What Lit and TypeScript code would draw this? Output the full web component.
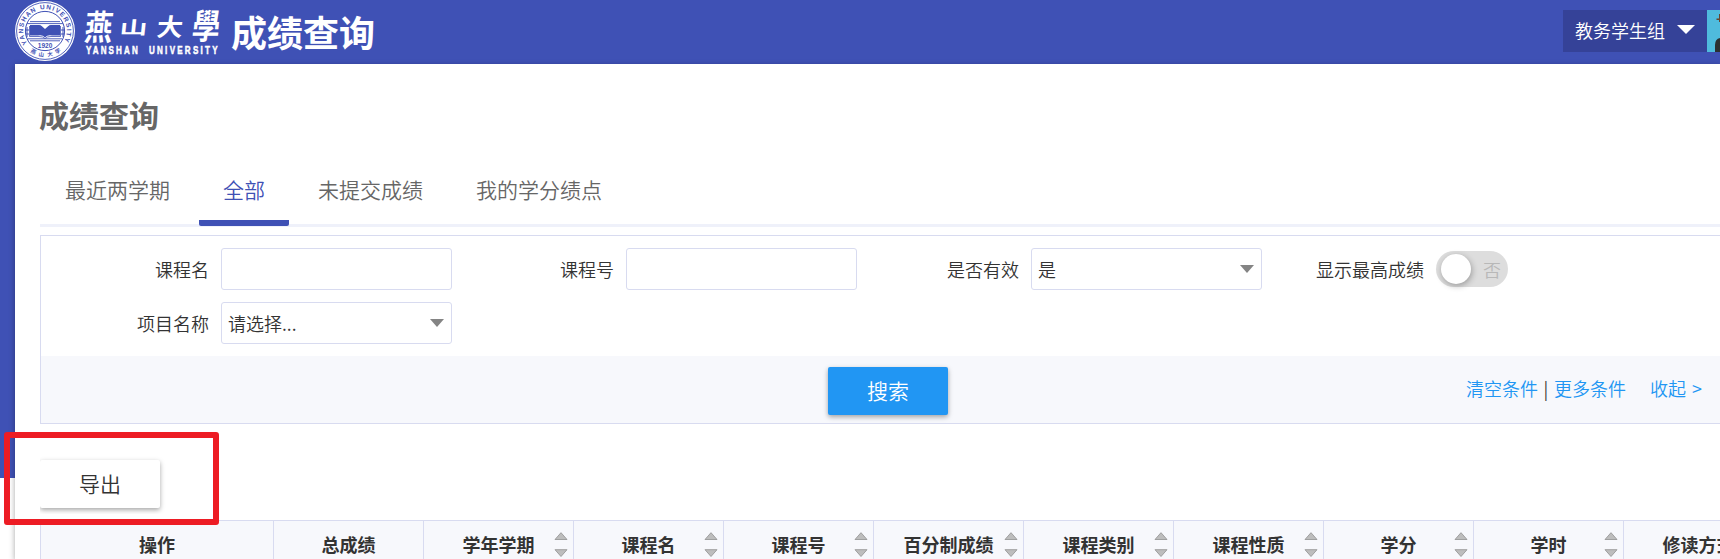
import { LitElement, html, svg, css } from "lit";
import { customElement, property } from "lit/decorators.js";

@customElement("school-logo")
class SchoolLogo extends LitElement {
  static styles = css`
    :host { display: block; }
    svg { display: block; }
    .seal-text { font: bold 6.5px "Liberation Sans", sans-serif; fill: #3f51b5; }
    .seal-cn { font: bold 5.5px "Noto Sans CJK SC", sans-serif; fill: #3f51b5; }
    .year { font: bold 6.5px "Liberation Sans", sans-serif; fill: #3f51b5; }
    .brush { font: 700 29px "Noto Sans CJK TC", sans-serif; fill: #fff; }
    .latin { font: bold 11.5px "Liberation Sans", sans-serif; fill: #fff; stroke: #fff; stroke-width: 0.5px; }
  `;
  render() {
    const brush: [string, number, number, number, number][] = [
      ["燕", 83.5, 40, 0.97, 1.2],
      ["山", 119, 34, 0.96, 0.6],
      ["大", 156, 36, 0.9, 0.84],
      ["學", 191, 39, 0.96, 1.2],
    ];
    return html`<svg width="224" height="64" viewBox="0 0 224 64">
      <circle cx="45" cy="31" r="30" fill="#fff" />
      <circle cx="45" cy="31" r="28.4" fill="none" stroke="#3f51b5" stroke-width="0.9" />
      <circle cx="45" cy="31" r="19.6" fill="none" stroke="#3f51b5" stroke-width="1" />
      <path id="arc" d="M 27.2 43.500 A 21.8 21.8 0 1 1 62.8 43.500" fill="none" />
      <text class="seal-text"><textPath href="#arc" textLength="92" lengthAdjust="spacing">YANSHAN UNIVERSITY</textPath></text>
      <path id="low" d="M 27 49.500 A 26 26 0 0 0 63 49.500" fill="none" />
      <text class="seal-cn"><textPath href="#low" textLength="33" startOffset="4">燕山大学</textPath></text>
      <path d="M30 21.6H60M27 23.6H63M27.5 38.8H62.5M30 40.8H60" stroke="#3f51b5" stroke-width="0.9" />
      <path d="M30 25H39Q43 25 45 28Q47 25 51 25H60V35.6H52Q47.5 34.6 45 37.6Q42.500 34.6 38 35.6H30Z" fill="#3f51b5" />
      <path d="M29.500 26V36.500H39Q43 36.300 45 38.600Q47 36.300 51 36.500H60.500V26" fill="none" stroke="#3f51b5" stroke-width="0.8" />
      <path d="M27 27V37M63 27V37M25.500 30H29M61 30H64.500M25.500 34H29M61 34H64.500" stroke="#3f51b5" stroke-width="1" />
      <path d="M40 24.500L45 29L50 24.500Z" fill="#fff" />
      <text class="year" x="37.800" y="48">1920</text>
      ${brush.map(([c, x, y, sx, sy]) => svg`<text class="brush" transform=${`translate(${x} ${y}) skewX(-6) scale(${sx} ${sy})`}>${c}</text>`)}
      <text class="latin" transform="translate(86 54) scale(0.7 1)" textLength="74" lengthAdjust="spacing">YANSHAN</text>
      <text class="latin" transform="translate(149 54) scale(0.7 1)" textLength="98" lengthAdjust="spacing">UNIVERSITY</text>
    </svg>`;
  }
}

@customElement("form-field")
class FormField extends LitElement {
  @property() label = "";
  @property() kind = "input";
  @property() value = "";
  static styles = css`
    :host { display: grid; grid-template-columns: 168px 231px; column-gap: 12px; align-items: center; height: 42px; font-size: 18px; line-height: 42px; }
    .label { text-align: right; white-space: nowrap; }
    .box { box-sizing: border-box; height: 42px; border: 1px solid #d8dbf0; border-radius: 3px; background: #fff; padding: 0 7px 0 6px; display: flex; align-items: center; justify-content: space-between; line-height: 40px; }
    .toggle { width: 72px; height: 36px; box-sizing: border-box; border-radius: 18px; background: #ddd; padding: 0 7px 0 5px; display: flex; align-items: center; justify-content: space-between; color: #b8b8b8; }
    .knob { width: 30px; height: 30px; border-radius: 50%; background: #fff; box-shadow: 1px 2px 6px rgba(0, 0, 0, 0.3); }
  `;
  render() {
    const arrow = html`<svg width="14" height="8" viewBox="0 0 14 8"><path d="M0 0H14L7 8Z" fill="#848484" /></svg>`;
    return html`<span class="label">${this.label}</span>
      ${this.kind === "toggle"
        ? html`<div class="toggle"><span class="knob"></span><span>${this.value}</span></div>`
        : html`<div class="box"><span>${this.value}</span>${this.kind === "select" ? arrow : null}</div>`}`;
  }
}

@customElement("app-root")
class AppRoot extends LitElement {
  static styles = css`
    :host { display: block; position: relative; width: 100%; height: 559px; overflow: hidden; background: linear-gradient(#3f51b5 478px, #fff 478px); font-family: "Noto Sans CJK SC", sans-serif; font-weight: 350; color: #333; white-space: nowrap; }
    .top { height: 64px; display: flex; background: #3f51b5; }
    .app { font-size: 36px; font-weight: 700; color: #fff; line-height: 62px; margin-left: 7px; flex: 1; }
    .user { margin-top: 10px; width: 144px; height: 42px; box-sizing: border-box; padding: 0 12px; display: flex; justify-content: space-between; align-items: center; background: #354298; color: #fff; font-size: 18px; line-height: 26px; }
    .user span { padding-bottom: 2px; }
    .user svg { margin-top: -4px; }
    .avatar { margin-top: 10px; width: 13px; height: 42px; display: block; }
    .sheet { margin-left: 15px; height: 495px; box-sizing: border-box; padding-left: 25px; background: #fff; box-shadow: 0 2px 6px rgba(0, 0, 0, 0.35); }
    h1 { margin: 0 0 0 -1px; padding-top: 28px; font-size: 30px; font-weight: 700; line-height: 44px; height: 44px; color: #666; }
    .tabs { display: flex; gap: 5px; padding-left: 1px; height: 63px; margin-top: 28px; margin-right: -20px; box-shadow: inset 0 -3px #eff1fa; }
    .tab { height: 62px; box-sizing: border-box; padding: 0 24px; font-size: 21px; line-height: 50px; color: #666; }
    .on { color: #3f51b5; border-bottom: 6px solid #3f51b5; border-radius: 0 0 2px 2px; }
    .panel { margin: 8px -20px 0 0; height: 189px; box-sizing: border-box; border: 1px solid #d8dbf0; }
    .fields { display: grid; grid-template-columns: repeat(4, 405px); grid-auto-rows: 42px; row-gap: 12px; padding: 12px 0; height: 120px; box-sizing: border-box; }
    .actions { height: 67px; background: #f7f8fc; display: grid; grid-template-columns: 787px 120px 1fr; align-items: start; }
    .button { width: 120px; height: 48px; border-radius: 2px; font-size: 21px; line-height: 46px; text-align: center; box-shadow: 0 2px 5px rgba(0, 0, 0, 0.35); background: #fff; }
    .search { grid-column: 2; margin-top: 11px; background: #2196f3; color: #fff; }
    .links { display: flex; color: #2196f3; font-size: 18px; line-height: 26px; margin: 19px 0 0 518px; }
    .bar { color: #333; width: 16px; text-align: center; }
    .fold { margin-left: 24px; word-spacing: 2px; }
    .export { height: 60px; margin-top: 30px; padding-top: 6px; box-sizing: border-box; overflow: hidden; }
    .table { display: flex; height: 60px; margin-top: 6px; width: 1733px; border: 1px solid #d8dbf0; border-right: 0; background: #f7f8fc; box-sizing: border-box; }
    .cell { width: 150px; flex: none; box-sizing: border-box; border-right: 1px solid #d8dbf0; font-size: 18px; font-weight: 700; line-height: 47px; display: grid; grid-template-columns: 19px 1fr 19px; text-align: center; }
    .cell:first-child { width: 233px; }
    .cell span { grid-column: 2; display: flex; justify-content: center; }
    .sort { margin-top: 11px; }
    .mark { position: absolute; left: 4px; top: 432px; width: 215px; height: 93px; box-sizing: border-box; border: 6px solid #ed1c24; border-radius: 3px; }
  `;
  render() {
    const columns = ["操作", "总成绩", "学年学期", "课程名", "课程号", "百分制成绩", "课程类别", "课程性质", "学分", "学时", "修读方式"];
    const tabs = ["最近两学期", "全部", "未提交成绩", "我的学分绩点"];
    const sort = html`<svg class="sort" width="14" height="26" viewBox="0 0 14 26">
      <path d="M1 7.500H13L7 0.700Z" fill="#bdbdbd" stroke="#999" stroke-width="0.9" />
      <path d="M1 17.700H13L7 24.500Z" fill="#bdbdbd" stroke="#999" stroke-width="0.9" />
    </svg>`;
    return html`
      <header class="top">
        <school-logo></school-logo>
        <div class="app">成绩查询</div>
        <div class="user"><span>教务学生组</span><svg width="18" height="9" viewBox="0 0 18 9"><path d="M0 0H18L9 9Z" fill="#fff" /></svg></div>
        <svg class="avatar" viewBox="0 0 13 42"><path d="M0 0H13V42H0Z" fill="#4fbbdd" /><path d="M12 4H13V12H12V10L9.500 10V8.500H12Z" fill="#69452d" /><path d="M8 42V35Q8 29 13 28V42Z" fill="#2c2f31" /></svg>
      </header>
      <main class="sheet">
        <h1>成绩查询</h1>
        <nav class="tabs">${tabs.map((t, i) => html`<div class="tab ${i === 1 ? "on" : ""}">${t}</div>`)}</nav>
        <section class="panel">
          <div class="fields">
            <form-field label="课程名"></form-field>
            <form-field label="课程号"></form-field>
            <form-field label="是否有效" kind="select" value="是"></form-field>
            <form-field label="显示最高成绩" kind="toggle" value="否"></form-field>
            <form-field label="项目名称" kind="select" value="请选择..."></form-field>
          </div>
          <div class="actions">
            <div class="button search">搜索</div>
            <div class="links"><span>清空条件</span><span class="bar">|</span><span>更多条件</span><span class="fold">收起 &gt;</span></div>
          </div>
        </section>
        <div class="export"><div class="button">导出</div></div>
        <div class="table">${columns.map((c, i) => html`<div class="cell"><span>${c}</span>${i > 1 ? sort : null}</div>`)}</div>
      </main>
      <div class="mark"></div>
    `;
  }
}
